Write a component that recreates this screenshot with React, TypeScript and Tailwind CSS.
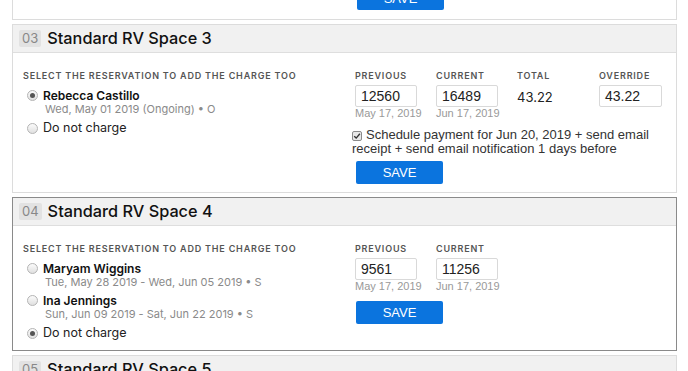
import React from "react";

interface Reservation {
  name: string;
  dates: string;
}

interface Space {
  num: string;
  title: string;
  reservations: Reservation[];
  selected: number; // -1 = do not charge
  previous: string;
  current: string;
  total?: string;
  override?: string;
  schedule?: string;
  active?: boolean;
}

const spaces: Space[] = [
  {
    num: "03",
    title: "Standard RV Space 3",
    reservations: [{ name: "Rebecca Castillo", dates: "Wed, May 01 2019 (Ongoing) • O" }],
    selected: 0,
    previous: "12560",
    current: "16489",
    total: "43.22",
    override: "43.22",
    schedule:
      "Schedule payment for Jun 20, 2019 + send email receipt + send email notification 1 days before",
  },
  {
    num: "04",
    title: "Standard RV Space 4",
    reservations: [
      { name: "Maryam Wiggins", dates: "Tue, May 28 2019 - Wed, Jun 05 2019 • S" },
      { name: "Ina Jennings", dates: "Sun, Jun 09 2019 - Sat, Jun 22 2019 • S" },
    ],
    selected: -1,
    previous: "9561",
    current: "11256",
    active: true,
  },
];

const sans = "font-['Inter','Open_Sans',sans-serif]";
const arial = "font-['Liberation_Sans',Arial,sans-serif]";
const labelStyle = `${sans} text-[9px] font-semibold tracking-[0.8px] uppercase text-[#555] leading-[12px]`;

const Radio = ({ checked }: { checked: boolean }) => (
  <span className="mt-[1px] w-[11px] h-[11px] rounded-full border border-[#b4b4b4] bg-gradient-to-b from-[#fbfbfb] to-[#e0e0e0] flex items-center justify-center shrink-0">
    {checked && <span className="w-[5px] h-[5px] rounded-full bg-[#555]" />}
  </span>
);

const SaveButton = () => (
  <button
    className={`${arial} w-[87px] h-[23px] bg-[#0b74de] text-white text-[13px] rounded-[2px] flex items-center justify-center`}
  >
    SAVE
  </button>
);

const Reading = ({ label, value, date }: { label: string; value: string; date: string }) => (
  <div className="w-[81px] flex flex-col">
    <div className={labelStyle}>{label}</div>
    <div
      className={`${arial} mt-[3px] w-[62px] h-[22px] border border-[#d9d9d9] rounded-[2px] bg-white text-[14px] text-[#222] pl-[5px] flex items-center`}
    >
      {value}
    </div>
    <div className={`${arial} text-[11px] text-[#999] leading-[13px]`}>{date}</div>
  </div>
);

const SpaceHeader = ({ num, title }: { num: string; title: string }) => (
  <div className="h-[28px] bg-[#f1f1f1] border-b border-[#dedede] flex items-center pl-[6px]">
    <span className={`${sans} bg-[#e2e2e2] rounded-[2px] text-[#888] text-[13px] leading-[17px] px-[3px]`}>
      {num}
    </span>
    <span className={`${sans} ml-[6px] text-[16.3px] font-medium text-[#111]`}>{title}</span>
  </div>
);

const SpaceCard = ({ s }: { s: Space }) => (
  <div
    className={`border ${s.active ? "border-[#8a8a8a]" : "border-[#dcdcdc]"} bg-white mb-[4px]`}
  >
    <SpaceHeader num={s.num} title={s.title} />
    <div className="flex pl-[10px] pt-[17px] pb-[8px]">
      <div className="w-[332px] flex flex-col pb-[2px]">
        <div className={labelStyle}>Select the reservation to add the charge too</div>
        <div className="mt-[7px] flex flex-col gap-[5px] pl-[4px]">
          {s.reservations.map((r, i) => (
            <div key={r.name} className="flex gap-[5px]">
              <Radio checked={s.selected === i} />
              <div className="flex flex-col">
                <span className={`${sans} text-[12px] font-semibold text-[#111] leading-[14px]`}>{r.name}</span>
                <span className={`${sans} text-[11px] text-[#8a8a8a] leading-[13px] pl-[2px]`}>{r.dates}</span>
              </div>
            </div>
          ))}
          <div className="flex gap-[5px] items-center">
            <Radio checked={s.selected === -1} />
            <span className={`${sans} text-[12.5px] text-[#222] leading-[14px]`}>Do not charge</span>
          </div>
        </div>
      </div>
      <div className="flex flex-col">
        <div className="flex">
          <Reading label="Previous" value={s.previous} date="May 17, 2019" />
          <Reading label="Current" value={s.current} date="Jun 17, 2019" />
          {s.total && (
            <div className="w-[82px] flex flex-col">
              <div className={labelStyle}>Total</div>
              <div className={`${sans} text-[13px] text-[#222] h-[22px] mt-[3px] flex items-center pt-[4px]`}>
                {s.total}
              </div>
            </div>
          )}
          {s.override && (
            <div className="flex flex-col">
              <div className={labelStyle}>Override</div>
              <div
                className={`${arial} mt-[3px] w-[63px] h-[22px] border border-[#d9d9d9] rounded-[2px] bg-white text-[14px] text-[#222] pl-[5px] flex items-center`}
              >
                {s.override}
              </div>
            </div>
          )}
        </div>
        {s.schedule && (
          <div className={`${arial} -ml-[3px] mt-[8px] w-[300px] text-[13px] leading-[13.5px] text-[#333]`}>
            <span className="inline-flex align-[-1px] w-[10px] h-[10px] mr-[4px] border border-[#8a8a8a] rounded-[2px] bg-[#e8e8e8] items-center justify-center">
              <svg viewBox="0 0 10 10" className="w-[8px] h-[8px]">
                <path d="M1.5 5.2 L4 7.6 L8.6 2.2" fill="none" stroke="#333" strokeWidth="1.7" />
              </svg>
            </span>
            {s.schedule}
          </div>
        )}
        <div className={s.schedule ? "mt-[6px] ml-[1px]" : "mt-[8px] ml-[1px]"}>
          <SaveButton />
        </div>
      </div>
    </div>
  </div>
);

export default function App() {
  return (
    <div className="w-[688px] h-[371px] overflow-hidden bg-white">
      <div className="pl-[12px] pr-[11px]">
        <div className="border-x border-b border-[#dcdcdc] h-[20px] mb-[4px] flex items-end pb-[9px] pl-[344px]">
          <SaveButton />
        </div>
        {spaces.map((s) => (
          <SpaceCard key={s.num} s={s} />
        ))}
        <div className="border border-[#dcdcdc]">
          <SpaceHeader num="05" title="Standard RV Space 5" />
        </div>
      </div>
    </div>
  );
}
